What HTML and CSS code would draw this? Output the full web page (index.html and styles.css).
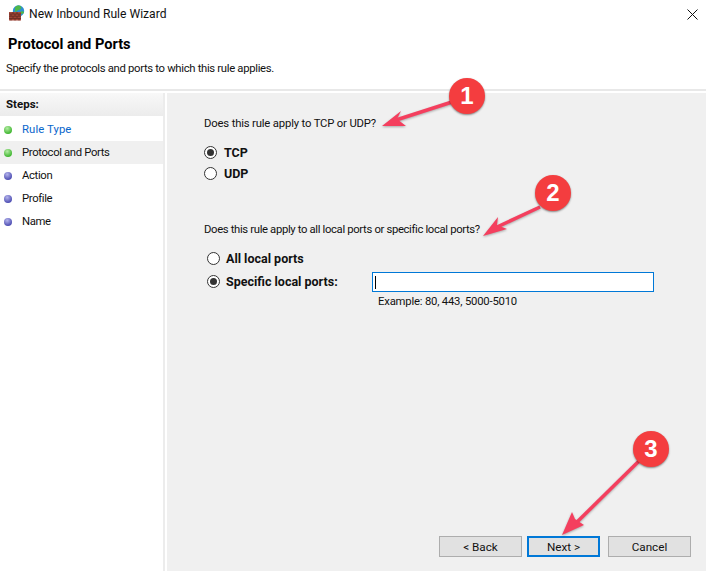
FILE: index.html
```html
<!DOCTYPE html>
<html lang="en">
<head>
<meta charset="utf-8">
<title>New Inbound Rule Wizard</title>
<link rel="stylesheet" href="styles.css">
</head>
<body>
<div class="window">
  <div class="titlebar">
    <svg class="app-icon" width="16" height="16" viewBox="0 0 16 16">
      <circle cx="9.500" cy="6" r="5.700" fill="#2f8fd0"/>
      <path d="M6 2.500c2-2.500 4.500-2.500 6-1 1 1.500-.5 3-2.500 3.500S8 7.500 6 6.500z" fill="#4fb848"/>
      <path d="M11.500 6.500c1.500-.5 3-.5 3.500.5s-1.500 2-3 2z" fill="#4fb848"/>
      <rect x="0" y="7" width="12" height="8.500" fill="#a5483a"/>
      <path d="M0 9h12M0 11.200h12M0 13.400h12M4 7v2M8 7v2M2 9v2.200M6 9v2.200M10 9v2.200M4 11.200v2.200M8 11.200v2.200M2 13.400v2.100M6 13.400v2.100M10 13.400v2.100" stroke="#5f2a22" stroke-width="0.800" fill="none"/>
    </svg>
    <span class="title-text">New Inbound Rule Wizard</span>
    <svg class="close-icon" width="11" height="11" viewBox="0 0 11 11">
      <path d="M0.500 0.500l10 10M10.500 0.500l-10 10" stroke="#111" stroke-width="1" fill="none"/>
    </svg>
  </div>
  <header class="page-header">
    <h1 class="page-title">Protocol and Ports</h1>
    <p class="page-desc">Specify the protocols and ports to which this rule applies.</p>
  </header>
  <div class="body">
    <aside class="sidebar">
      <div class="steps-head">Steps:</div>
      <ul class="steps">
        <li class="step done link"><span class="dot green"></span>Rule Type</li>
        <li class="step done current"><span class="dot green"></span>Protocol and Ports</li>
        <li class="step"><span class="dot blue"></span>Action</li>
        <li class="step"><span class="dot blue"></span>Profile</li>
        <li class="step"><span class="dot blue"></span>Name</li>
      </ul>
    </aside>
    <main class="content">
      <p class="question first">Does this rule apply to TCP or UDP?</p>
      <div class="radio-group first-group">
        <div class="radio-row"><span class="radio on"></span><span class="radio-label">TCP</span></div>
        <div class="radio-row"><span class="radio"></span><span class="radio-label">UDP</span></div>
      </div>
      <p class="question second">Does this rule apply to all local ports or specific local ports?</p>
      <div class="radio-group second-group">
        <div class="radio-row"><span class="radio"></span><span class="radio-label">All local ports</span></div>
        <div class="radio-row port-row">
          <span class="radio on"></span><span class="radio-label port-label">Specific local ports:</span>
          <div class="port-input"><span class="caret"></span></div>
        </div>
        <div class="example">Example: 80, 443, 5000-5010</div>
      </div>
      <div class="buttons">
        <button class="btn">&lt; Back</button>
        <button class="btn primary">Next &gt;</button>
        <button class="btn cancel">Cancel</button>
      </div>
    </main>
  </div>
  <svg class="arrows" width="706" height="571" viewBox="0 0 706 571">
    <g class="arrow">
      <path d="M452 102L396 120"/>
      <path class="head" d="M382 126L401 111L397 119L406 126Z"/>
      <path d="M540 207L497 227"/>
      <path class="head" d="M483 236L498 217L497 225L507 229Z"/>
      <path d="M640 460L574 525"/>
      <path class="head" d="M562 535L572 512L575 519L584 525Z"/>
    </g>
  </svg>
  <div class="badge badge-1">1</div>
  <div class="badge badge-2">2</div>
  <div class="badge badge-3">3</div>
</div>
</body>
</html>
```
FILE: styles.css
```css
* { box-sizing: border-box; }
html, body { margin: 0; padding: 0; }
body { width: 706px; height: 571px; overflow: hidden; background: #fff; font-family: Roboto, "Noto Sans", sans-serif; font-size: 11.7px; color: #111; }
.window { position: relative; width: 706px; height: 571px; display: flex; flex-direction: column; }
.titlebar { height: 28px; display: flex; align-items: center; padding-left: 9px; flex: none; }
.app-icon { flex: none; margin-top: -2px; }
.title-text { margin-left: 4px; font-size: 12.1px; flex: 1; }
.close-icon { margin: 0 8px 0 0; }
.page-header { height: 63px; padding: 7px 0 0 8px; flex: none; border-bottom: 2px solid #e8e8e8; }
.page-title { margin: 0; font-size: 14.6px; font-weight: 700; line-height: 18px; color: #000; }
.page-desc { margin: 8px 0 0 -2px; line-height: 16px; font-size: 11.3px; letter-spacing: -0.32px; }
.body { flex: 1; display: flex; min-height: 0; background: #fff; padding-top: 2px; }
.sidebar { width: 165px; flex: none; border-right: 2px solid #ececec; }
.steps-head { height: 23px; line-height: 22px; padding-left: 6px; font-weight: 700; font-size: 11.5px; background: linear-gradient(#f8f8f8, #ececec); }
.steps { list-style: none; margin: 2px 0 0; padding: 0; }
.step { height: 23px; display: flex; align-items: center; gap: 10px; padding-left: 4px; font-size: 11.3px; letter-spacing: -0.35px; }
.step.link { color: #0a66cc; letter-spacing: 0.1px; }
.step.current { background: #f0f0f0; }
.dot { width: 8px; height: 8px; border-radius: 50%; flex: none; }
.dot.green { background: radial-gradient(circle at 40% 30%, #b5ecA5, #44b834 70%); }
.dot.blue { background: radial-gradient(circle at 40% 30%, #b5b5ec, #5252b5 70%); }
.content { flex: 1; position: relative; background: #f0f0f0; padding: 0 0 0 37px; margin-left: 2px; display: flex; flex-direction: column; }
.question { margin: 0; line-height: 16px; font-size: 11.3px; }
.first { margin-top: 23px; letter-spacing: -0.17px; }
.second { margin-top: 42px; letter-spacing: -0.35px; }
.radio-group { display: flex; flex-direction: column; }
.first-group { margin-top: 13px; gap: 7px; }
.second-group { margin: 13px 0 0 3px; }
.radio-row { display: flex; align-items: center; height: 14px; }
.radio { width: 13px; height: 13px; border-radius: 50%; border: 1px solid #333; background: #fff; flex: none; position: relative; }
.radio.on::after { content: ""; position: absolute; left: 2px; top: 2px; width: 7px; height: 7px; border-radius: 50%; background: #333; }
.radio-label { margin-left: 7px; font-weight: 700; font-size: 12.5px; }
.second-group .radio-label { margin-left: 6px; }
.port-row { height: 20px; margin-top: 7px; }
.port-row .radio, .port-row .port-label { margin-bottom: 2px; }
.second-group .port-label { width: 147px; flex: none; }
.port-input { width: 282px; height: 20px; margin-left: -1px; background: #fff; border: 1px solid #0078d7; padding: 3px 0 0 2px; }
.caret { display: block; width: 1px; height: 13px; background: #000; }
.example { margin: 2px 0 0 171px; line-height: 16px; font-size: 11.3px; letter-spacing: -0.2px; }
.buttons { margin-top: auto; margin-bottom: 14px; margin-left: 235px; display: flex; }
.btn { width: 83px; height: 21px; padding: 0; background: #e1e1e1; border: 1px solid #adadad; font: inherit; color: #111; }
.btn.primary { width: 73px; margin-left: 5px; border: 2px solid #0078d7; }
.btn.cancel { margin-left: 8px; }
.arrows { position: absolute; left: 0; top: 0; pointer-events: none; filter: drop-shadow(0 1px 1px rgba(0,0,0,.3)); }
.arrow path { fill: none; stroke: #f43f5e; stroke-width: 3.5; }
.arrow .head { fill: #f43f5e; stroke: none; }
.badge { position: absolute; width: 36px; height: 36px; border-radius: 50%; background: #f43d3f; color: #fff; font: 700 24px/36px "Liberation Sans", Arial, sans-serif; text-align: center; box-shadow: 0 1px 2px rgba(0,0,0,.45); }
.badge-1 { left: 449px; top: 78px; }
.badge-2 { left: 535px; top: 175px; }
.badge-3 { left: 633px; top: 431px; }
```
